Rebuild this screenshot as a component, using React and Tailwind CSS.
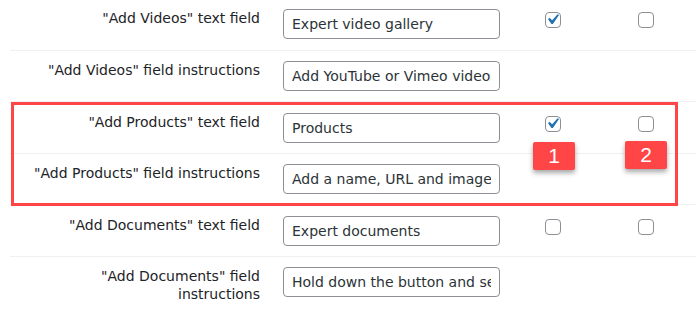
import React from 'react';

const rows = [
  { label: '"Add Videos" text field', value: 'Expert video gallery', pad: 'pt-[9px] pb-[11px]', boxes: [true, false] },
  { label: '"Add Videos" field instructions', value: 'Add YouTube or Vimeo videos to your gallery', pad: 'pt-[10px] pb-[10px]' },
  { label: '"Add Products" text field', value: 'Products', pad: 'pt-[11px] pb-[10px]', boxes: [true, false] },
  { label: '"Add Products" field instructions', value: 'Add a name, URL and image for each product', pad: 'pt-[10px] pb-[10px]' },
  { label: '"Add Documents" text field', value: 'Expert documents', pad: 'pt-[11px] pb-[10px]', boxes: [false, false] },
  { label: '"Add Documents" field instructions', value: 'Hold down the button and select files', pad: 'pt-[10px] pb-[10px]' },
];

function Checkbox({ checked }) {
  return (
    <span className="relative block w-4 h-4 rounded-[4px] border border-[#8c8f94] bg-white">
      {checked && (
        <svg className="absolute -top-[4px] -left-[4px] w-[21px] h-[21px]" viewBox="0 0 20 20">
          <path d="M14.83 4.89l1.34.94-5.81 8.38H9.02L5.78 9.67l1.34-1.25 2.57 2.4z" fill="#2271b1" />
        </svg>
      )}
    </span>
  );
}

function Badge({ n, className }) {
  return (
    <div
      className={`absolute h-[28px] w-[42px] rounded-[2px] bg-[#ff4545] text-white text-[21px] leading-[28px] text-center shadow-[0_3px_5px_rgba(0,0,0,0.35)] ${className}`}
      style={{ fontFamily: '"Liberation Sans", Arial, sans-serif' }}
    >
      {n}
    </div>
  );
}

export default function App() {
  return (
    <div className="relative w-[696px] h-[313px] overflow-hidden bg-white text-[14px] leading-[18px] text-[#1d2327]" style={{ fontFamily: '"DejaVu Sans", Verdana, sans-serif' }}>
      <div className="ml-[10px]">
        {rows.map((row, i) => (
          <div key={i} className={`flex ${i < rows.length - 1 ? 'border-b border-[#f0f0f1]' : ''} ${row.pad}`}>
            <div className="w-[250px] pl-[14px] text-right">{row.label}</div>
            <input
              readOnly
              value={row.value}
              className="ml-[23px] h-[30px] w-[217px] shrink-0 rounded-[4px] border border-[#8c8f94] px-[8px] text-[14px] text-[#2c3338] outline-none"
              style={{ fontFamily: '"DejaVu Sans", Verdana, sans-serif' }}
            />
            {row.boxes && (
              <div className="flex pt-[3px]">
                <span className="ml-[45px]"><Checkbox checked={row.boxes[0]} /></span>
                <span className="ml-[77px]"><Checkbox checked={row.boxes[1]} /></span>
              </div>
            )}
          </div>
        ))}
      </div>
      <div className="absolute left-[11px] top-[102px] w-[667px] h-[104px] border-[3px] border-[#ff4545]" />
      <Badge n="1" className="left-[533px] top-[142px]" />
      <Badge n="2" className="left-[625px] top-[141px]" />
    </div>
  );
}
